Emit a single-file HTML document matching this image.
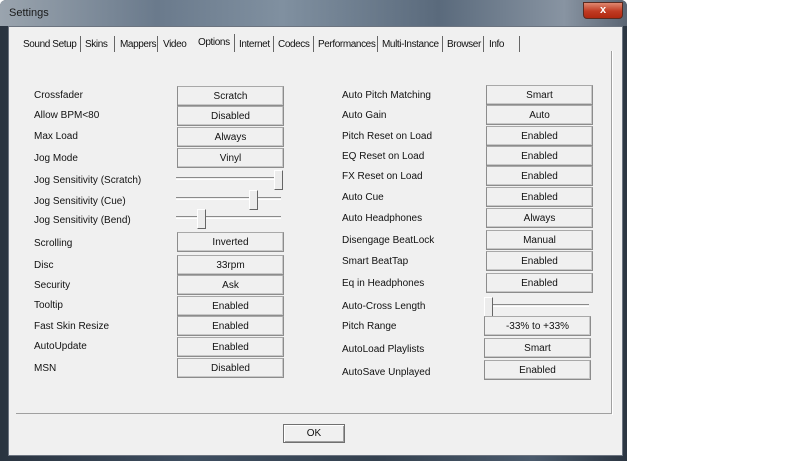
<!DOCTYPE html>
<html><head><style>
body{margin:0;width:800px;height:461px;background:#fff;position:relative;overflow:hidden;font-family:"Liberation Sans",sans-serif;font-size:10px;color:#111}
.a{position:absolute;white-space:nowrap}
.t{letter-spacing:-0.4px}
#frame{position:absolute;left:0;top:0;width:627px;height:461px;background:linear-gradient(90deg,#2a3440,#3e4e60 30%,#34414f 60%,#4a5a6c 85%,#2c3642);border-radius:6px 6px 0 0}
#tb{position:absolute;left:0;top:0;width:627px;height:26px;background:linear-gradient(90deg,#9aa4ae,#6a7a8c 25%,#8090a0 45%,#5a6a7c 70%,#8894a2 90%,#5a6472);border-radius:6px 6px 0 0}
#client{position:absolute;left:8px;top:26px;width:613px;height:428px;background:#f0f0f0;border:1px solid #6c7480}
#close{position:absolute;left:583px;top:2px;width:38px;height:15px;border-radius:0 0 4px 4px;background:linear-gradient(#e08870,#c03a22 55%,#b02810);border:1px solid #5a2a20;color:#fff;font-weight:bold;font-size:11px;text-align:center;line-height:14px}
.b{position:absolute;width:105px;height:18px;border:1px solid #8c8c8c;border-top-color:#a8a8a8;background:#f0f0f0;text-align:center;line-height:19px;box-shadow:inset -1px -1px 0 #c8c8c8}
.sl{position:absolute;height:1px;border-top:1px solid #8a8a8a;border-bottom:1px solid #fff}
.th{position:absolute;width:7px;height:18px;border-right:1px solid #666;border-bottom:1px solid #666;border-left:1px solid #fff;border-top:1px solid #fff;background:#ececec}
.sep{position:absolute;top:36px;width:1px;height:16px;background:#666}
</style></head><body>
<div id="frame"></div>
<div id="tb"></div>
<div class="a" style="left:9px;top:7px;color:#1a1a1a;font-size:11px">Settings</div>
<div id="close">x</div>
<div id="client"></div>
<div class="a" style="left:16px;top:413px;width:597px;height:1px;background:#a0a0a0"></div>
<div class="a" style="left:611px;top:51px;width:1px;height:363px;background:#a0a0a0"></div>
<div class="a" style="left:612px;top:51px;width:1px;height:364px;background:#fff"></div>
<!-- tabs -->
<div class="a t" style="left:23px;top:39px">Sound Setup</div><div class="sep" style="left:80px"></div>
<div class="a t" style="left:85px;top:39px">Skins</div><div class="sep" style="left:114px"></div>
<div class="a t" style="left:120px;top:39px">Mappers</div><div class="sep" style="left:157px"></div>
<div class="a t" style="left:163px;top:39px">Video</div>
<div class="a t" style="left:198px;top:37px">Options</div><div class="sep" style="left:234px;top:34px;height:18px"></div>
<div class="a t" style="left:239px;top:39px">Internet</div><div class="sep" style="left:273px"></div>
<div class="a t" style="left:278px;top:39px">Codecs</div><div class="sep" style="left:313px"></div>
<div class="a t" style="left:318px;top:39px">Performances</div><div class="sep" style="left:377px"></div>
<div class="a t" style="left:382px;top:39px">Multi-Instance</div><div class="sep" style="left:442px"></div>
<div class="a t" style="left:447px;top:39px">Browser</div><div class="sep" style="left:483px"></div>
<div class="a t" style="left:489px;top:39px">Info</div><div class="sep" style="left:519px"></div>
<!-- left labels -->
<div class="a" style="left:34px;top:90px">Crossfader</div>
<div class="a" style="left:34px;top:110px">Allow BPM&lt;80</div>
<div class="a" style="left:34px;top:131px">Max Load</div>
<div class="a" style="left:34px;top:153px">Jog Mode</div>
<div class="a" style="left:34px;top:175px">Jog Sensitivity (Scratch)</div>
<div class="a" style="left:34px;top:196px">Jog Sensitivity (Cue)</div>
<div class="a" style="left:34px;top:215px">Jog Sensitivity (Bend)</div>
<div class="a" style="left:34px;top:238px">Scrolling</div>
<div class="a" style="left:34px;top:260px">Disc</div>
<div class="a" style="left:34px;top:280px">Security</div>
<div class="a" style="left:34px;top:300px">Tooltip</div>
<div class="a" style="left:34px;top:321px">Fast Skin Resize</div>
<div class="a" style="left:34px;top:341px">AutoUpdate</div>
<div class="a" style="left:34px;top:363px">MSN</div>
<div class="b" style="left:177px;top:86px">Scratch</div>
<div class="b" style="left:177px;top:106px">Disabled</div>
<div class="b" style="left:177px;top:127px">Always</div>
<div class="b" style="left:177px;top:148px">Vinyl</div>
<div class="sl" style="left:176px;top:177px;width:105px"></div><div class="th" style="left:274px;top:170px"></div>
<div class="sl" style="left:176px;top:197px;width:105px"></div><div class="th" style="left:249px;top:190px"></div>
<div class="sl" style="left:176px;top:216px;width:105px"></div><div class="th" style="left:197px;top:209px"></div>
<div class="b" style="left:177px;top:232px">Inverted</div>
<div class="b" style="left:177px;top:255px">33rpm</div>
<div class="b" style="left:177px;top:275px">Ask</div>
<div class="b" style="left:177px;top:296px">Enabled</div>
<div class="b" style="left:177px;top:316px">Enabled</div>
<div class="b" style="left:177px;top:337px">Enabled</div>
<div class="b" style="left:177px;top:358px">Disabled</div>
<!-- right -->
<div class="a" style="left:342px;top:90px">Auto Pitch Matching</div>
<div class="a" style="left:342px;top:110px">Auto Gain</div>
<div class="a" style="left:342px;top:131px">Pitch Reset on Load</div>
<div class="a" style="left:342px;top:151px">EQ Reset on Load</div>
<div class="a" style="left:342px;top:171px">FX Reset on Load</div>
<div class="a" style="left:342px;top:192px">Auto Cue</div>
<div class="a" style="left:342px;top:213px">Auto Headphones</div>
<div class="a" style="left:342px;top:235px">Disengage BeatLock</div>
<div class="a" style="left:342px;top:256px">Smart BeatTap</div>
<div class="a" style="left:342px;top:278px">Eq in Headphones</div>
<div class="a" style="left:342px;top:301px">Auto-Cross Length</div>
<div class="a" style="left:342px;top:321px">Pitch Range</div>
<div class="a" style="left:342px;top:344px">AutoLoad Playlists</div>
<div class="a" style="left:342px;top:367px">AutoSave Unplayed</div>
<div class="b" style="left:486px;top:85px">Smart</div>
<div class="b" style="left:486px;top:105px">Auto</div>
<div class="b" style="left:486px;top:126px">Enabled</div>
<div class="b" style="left:486px;top:146px">Enabled</div>
<div class="b" style="left:486px;top:166px">Enabled</div>
<div class="b" style="left:486px;top:187px">Enabled</div>
<div class="b" style="left:486px;top:208px">Always</div>
<div class="b" style="left:486px;top:230px">Manual</div>
<div class="b" style="left:486px;top:251px">Enabled</div>
<div class="b" style="left:486px;top:273px">Enabled</div>
<div class="sl" style="left:485px;top:304px;width:104px"></div><div class="th" style="left:484px;top:297px"></div>
<div class="b" style="left:484px;top:316px">-33% to +33%</div>
<div class="b" style="left:484px;top:338px">Smart</div>
<div class="b" style="left:484px;top:360px">Enabled</div>
<!-- OK -->
<div class="b" style="left:283px;top:424px;width:60px;height:17px;line-height:17px;border-color:#707070;box-shadow:inset 1px 1px 0 #fff,inset -1px -1px 0 #a0a0a0">OK</div>
</body></html>
